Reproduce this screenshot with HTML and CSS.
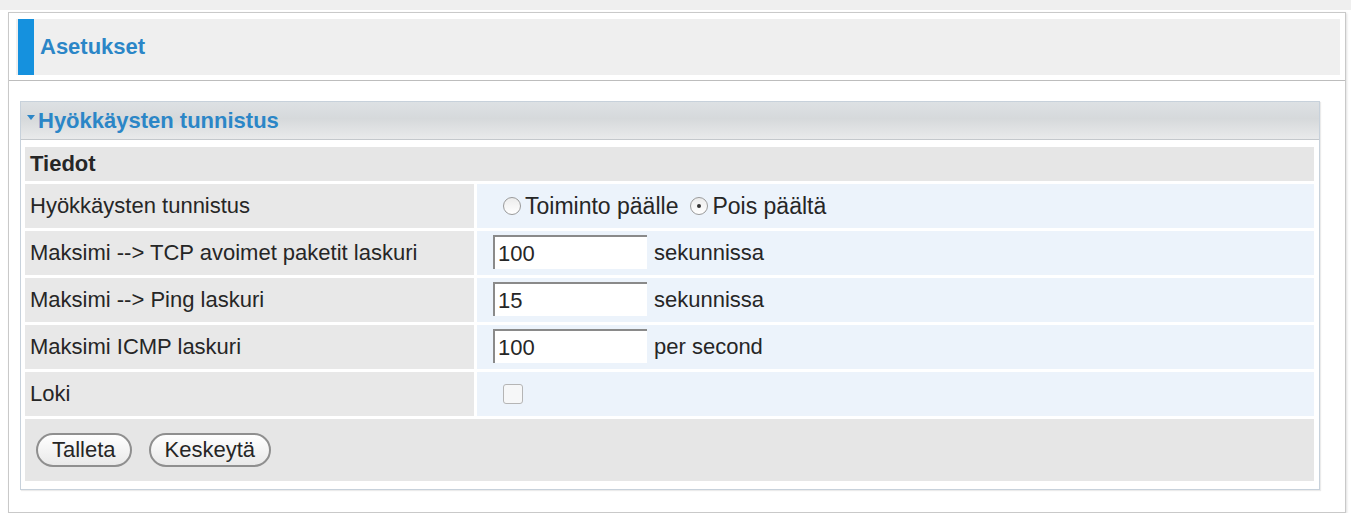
FILE: index.html
```html
<!DOCTYPE html>
<html>
<head>
  <meta charset="utf-8">
  <title>Asetukset</title>
  <link rel="stylesheet" href="styles.css">
</head>

<body>

  <div class="top-strip"></div>

  <div class="frame">

    <div class="frame-head">
      <div class="head-band">
        <span class="head-bar"></span>
        <h1>Asetukset</h1>
      </div>
    </div>

    <div class="panel">

      <div class="panel-title">
        <span class="arrow"></span>
        <h2>Hyökkäysten tunnistus</h2>
      </div>

      <div class="panel-body">
        <div class="form">

          <div class="section wide">Tiedot</div>

          <div class="label">Hyökkäysten tunnistus</div>
          <div class="value">
            <label class="radio"><span class="dot"></span>Toiminto päälle</label>
            <label class="radio"><span class="dot checked"></span>Pois päältä</label>
          </div>

          <div class="label">Maksimi --&gt; TCP avoimet paketit laskuri</div>
          <div class="value">
            <input type="text" value="100">
            <span class="unit">sekunnissa</span>
          </div>

          <div class="label">Maksimi --&gt; Ping laskuri</div>
          <div class="value">
            <input type="text" value="15">
            <span class="unit">sekunnissa</span>
          </div>

          <div class="label">Maksimi ICMP laskuri</div>
          <div class="value">
            <input type="text" value="100">
            <span class="unit">per second</span>
          </div>

          <div class="label">Loki</div>
          <div class="value">
            <span class="checkbox"></span>
          </div>

          <div class="actions wide">
            <button>Talleta</button>
            <button>Keskeytä</button>
          </div>

        </div>
      </div>

    </div>

  </div>

</body>
</html>
```

FILE: styles.css
```css
body {
  margin: 0;
  font-family: 'Liberation Sans', Arial, sans-serif;
  font-size: 22px;
  color: #262626;
  background: #fff;
}

.top-strip {
  height: 10px;
  background: #efefef;
}

.frame {
  margin: 2px 0 0 8px;
  width: 1338px;
  height: 501px;
  box-sizing: border-box;
  border: 1px solid #c9c9c9;
  box-shadow: 1px 1px 2px rgba(0,0,0,0.12);
}

.frame-head {
  padding: 6px 5px 5px 7px;
  border-bottom: 1px solid #bdbdbd;
}

.head-band {
  display: flex;
  align-items: center;
  height: 56px;
  background: #efefef;
}

.head-bar {
  align-self: stretch;
  width: 16px;
  margin-left: 2px;
  background: #1591de;
}

h1 {
  margin: 0 0 0 6px;
  font-size: 22px;
  font-weight: bold;
  color: #2b86c7;
}

.panel {
  margin: 20px 0 0 11px;
  width: 1300px;
  box-sizing: border-box;
  border: 1px solid #c7d1db;
  box-shadow: 1px 1px 1px rgba(0,0,0,0.08);
}

.panel-title {
  display: flex;
  align-items: center;
  height: 37px;
  padding-left: 6px;
  border-bottom: 1px solid #c4c8cc;
  background: linear-gradient(#dde1e4, #d6d9db 45%, #e9eaeb);
}

.arrow {
  width: 0;
  height: 0;
  border-left: 4px solid transparent;
  border-right: 4px solid transparent;
  border-top: 5px solid #2b86c7;
  margin: 0 3px 6px 0;
}

h2 {
  margin: 0;
  font-size: 22px;
  font-weight: bold;
  color: #2b86c7;
}

.panel-body {
  padding: 7px 5px 8px 4px;
}

.form {
  display: grid;
  grid-template-columns: 449px 1fr;
  gap: 3px;
}

.wide {
  grid-column: 1 / 3;
}

.section {
  height: 34px;
  line-height: 34px;
  padding-left: 5px;
  background: #e6e6e6;
  font-weight: bold;
}

.label {
  height: 44px;
  line-height: 44px;
  padding-left: 5px;
  background: #e8e8e8;
}

.value {
  display: flex;
  align-items: center;
  height: 44px;
  padding-left: 16px;
  background: #ecf3fb;
}

.radio {
  display: flex;
  align-items: center;
  margin-right: 12px;
  font-size: 23px;
}

.radio:first-child {
  margin-left: 10px;
}

.dot {
  width: 16px;
  height: 16px;
  margin-right: 4px;
  border: 1px solid #9a9a9a;
  border-radius: 50%;
  background: linear-gradient(#ececec, #fff);
  position: relative;
}

.dot.checked::after {
  content: '';
  position: absolute;
  left: 6px;
  top: 6px;
  width: 4px;
  height: 4px;
  border-radius: 50%;
  background: #333;
}

input {
  width: 154px;
  height: 34px;
  margin-top: 4px;
  align-self: flex-start;
  box-sizing: border-box;
  padding: 2px 0 0 3px;
  border: 0;
  border-top: 2px solid #8a8a8a;
  border-left: 2px solid #8a8a8a;
  background: #fff;
  font-family: inherit;
  font-size: 22px;
  color: #262626;
  outline: none;
}

.unit {
  margin-left: 7px;
}

.checkbox {
  width: 18px;
  height: 18px;
  margin-left: 10px;
  border: 1px solid #b5b5b5;
  border-radius: 3px;
  background: #f6f7f8;
}

.actions {
  display: flex;
  align-items: center;
  gap: 17px;
  height: 62px;
  padding-left: 11px;
  background: #e6e6e6;
}

button {
  height: 34px;
  padding: 0 14px;
  border: 2px solid #8f8f8f;
  border-radius: 17px;
  background: linear-gradient(#fff, #e9e9e9);
  font-family: inherit;
  font-size: 22px;
  color: #262626;
}
```
